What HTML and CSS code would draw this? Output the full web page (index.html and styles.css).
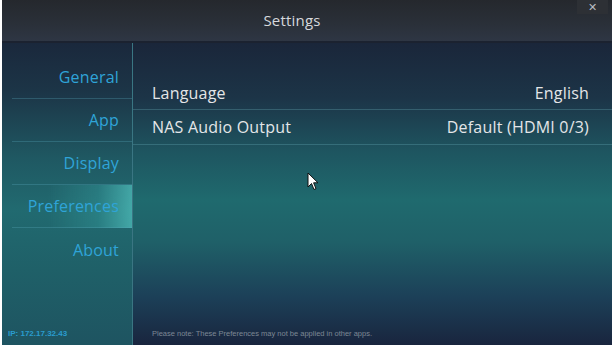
FILE: index.html
```html
<!DOCTYPE html>
<html lang="en">
<head>
  <meta charset="UTF-8" />
  <title>Settings</title>
  <link rel="stylesheet" href="styles.css">
</head>
<body>

<div class="screen">
  <header class="titlebar">
    <span class="title">Settings</span>
    <button class="close-btn">&#x2715;</button>
  </header>

  <div class="main">
    <aside class="sidebar">
      <nav class="nav">
        <div class="nav-item">General</div>
        <div class="nav-item">App</div>
        <div class="nav-item">Display</div>
        <div class="nav-item active">Preferences</div>
        <div class="nav-item">About</div>
      </nav>
      <div class="ip">IP: 172.17.32.43</div>
    </aside>

    <section class="content">
      <div class="rows">
        <div class="row">
          <span class="label">Language</span>
          <span class="value">English</span>
        </div>
        <div class="row">
          <span class="label">NAS Audio Output</span>
          <span class="value">Default (HDMI 0/3)</span>
        </div>
      </div>
      <p class="note">Please note: These Preferences may not be applied in other apps.</p>

      <svg class="cursor" width="12" height="19" viewBox="0 0 12 19">
        <path d="M1 1 L1 15 L4.5 11.5 L7 17.5 L9 16.6 L6.6 10.8 L11 10.8 Z" fill="#fff" stroke="#111" stroke-width="1"/>
      </svg>
    </section>
  </div>
</div>

</body>
</html>
```

FILE: styles.css
```css
* {
  box-sizing: border-box;
}

body {
  margin: 0;
  background: #fff;
  font-family: 'Open Sans', 'Liberation Sans', sans-serif;
}

.screen {
  width: 610px;
  height: 345px;
  margin-left: 2px;
  display: flex;
  flex-direction: column;
  overflow: hidden;
}

.titlebar {
  position: relative;
  height: 43px;
  flex: none;
  display: flex;
  align-items: center;
  justify-content: center;
  padding-right: 30px;
  background: linear-gradient(to bottom, #25282d 0%, #2a3039 60%, #2e3644 100%);
  border-bottom: 2px solid #1b2230;
}

.title {
  color: #d6d8dc;
  font-size: 15px;
  margin-top: -1px;
  letter-spacing: 0.2px;
}

.close-btn {
  position: absolute;
  top: 0;
  right: 4px;
  width: 31px;
  height: 14px;
  border: none;
  padding: 0;
  background: #2d3035;
  color: #b9bcc1;
  font-size: 11px;
  line-height: 13px;
  font-family: 'DejaVu Sans', sans-serif;
  font-weight: 300;
}

.main {
  flex: 1;
  display: flex;
  background: linear-gradient(to bottom,
    #1a263a 0%,
    #1c3447 18%,
    #1e5560 36%,
    #1f6a6e 52%,
    #1f6068 66%,
    #1c4058 84%,
    #19253e 100%);
}

.sidebar {
  width: 131px;
  flex: none;
  display: flex;
  flex-direction: column;
  justify-content: space-between;
  border-right: 1px solid #3a7683;
  padding-top: 13px;
  padding-bottom: 7px;
  background: linear-gradient(to bottom,
    #1a283c 0%,
    #1c3547 16%,
    #1f5862 38%,
    #216a70 55%,
    #1f6068 75%,
    #1e5461 100%);
}

.nav {
  display: flex;
  flex-direction: column;
}

.nav-item {
  height: 43px;
  display: flex;
  align-items: center;
  justify-content: flex-end;
  padding-right: 13px;
  margin-left: 10px;
  color: #2fa4d8;
  font-size: 16px;
  letter-spacing: 0.2px;
  border-bottom: 1px solid rgba(90, 170, 190, 0.3);
}

.nav-item:last-child {
  border-bottom: none;
}

.nav-item.active {
  background: linear-gradient(to right, rgba(60, 180, 180, 0) 30%, rgba(60, 175, 175, 0.3) 72%, rgba(90, 210, 205, 0.6) 100%);
}

.ip {
  color: #2a9ccf;
  font-size: 8px;
  font-weight: bold;
  padding-left: 6px;
  font-family: 'Liberation Sans', sans-serif;
}

.content {
  position: relative;
  flex: 1;
  display: flex;
  flex-direction: column;
  justify-content: space-between;
  padding-top: 32px;
  padding-bottom: 7px;
}

.rows {
  display: flex;
  flex-direction: column;
}

.row {
  height: 35px;
  display: flex;
  align-items: center;
  justify-content: space-between;
  padding: 0 23px 0 19px;
  color: #e4e6e8;
  font-size: 16px;
  letter-spacing: 0.2px;
  border-bottom: 1px solid rgba(110, 180, 190, 0.3);
}

.row:first-child {
  padding-top: 2px;
}

.note {
  margin: 0;
  padding-left: 19px;
  color: #7d8794;
  font-size: 7.5px;
  font-family: 'Liberation Sans', sans-serif;
}

.cursor {
  position: absolute;
  left: 174px;
  top: 129px;
}
```
